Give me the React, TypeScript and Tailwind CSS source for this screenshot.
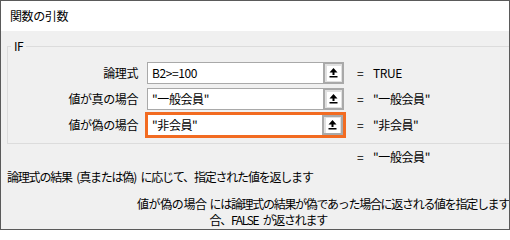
import React from "react";

type Arg = {
  label: string;
  value: string;
  result: string;
  active?: boolean;
};

const args: Arg[] = [
  { label: "論理式", value: "B2>=100", result: "TRUE" },
  { label: "値が真の場合", value: "\"一般会員\"", result: "\"一般会員\"" },
  { label: "値が偽の場合", value: "\"非会員\"", result: "\"非会員\"", active: true },
];

function RefIcon() {
  return (
    <svg width="9" height="10" viewBox="0 0 9 10" className="block">
      <path d="M4.5 0 L8.5 4.5 L5.5 4.5 L5.5 7 L3.5 7 L3.5 4.5 L0.5 4.5 Z" fill="#000" />
      <rect x="0.5" y="8" width="8" height="1.5" fill="#000" />
    </svg>
  );
}

function ArgInput({ value, active }: { value: string; active?: boolean }) {
  return (
    <div
      className={`flex h-[22px] w-[197px] ${
        active ? "-m-[2px] h-[26px] w-[201px] border-[3px] border-[#f26b21]" : ""
      }`}
    >
      <div
        className={`flex flex-1 items-center bg-white pl-[4px] ${
          active ? "" : "border border-r-0 border-[#a9a9a9]"
        }`}
      >
        {value}
      </div>
      <div className="flex w-[21px] items-center justify-center border-2 border-[#a9a9a9] bg-[#e1e1e1]">
        <div className="flex h-[15px] w-[14px] items-center justify-center bg-white">
          <RefIcon />
        </div>
      </div>
    </div>
  );
}

export default function App() {
  return (
    <div className="h-[230px] w-[510px] overflow-hidden border border-[#5a5a5a] bg-[#f0f0f0] font-['Noto_Sans_CJK_JP',sans-serif] text-[12px] leading-[16px] tracking-[-0.4px] text-black">
      <div className="flex h-[30px] items-center bg-white pl-[9px]">関数の引数</div>

      <fieldset className="mt-[7px] ml-[6px] w-[520px] border border-[#dcdcdc] pt-[8px] pb-[7px]">
        <legend className="ml-[3px] px-[3px] leading-[16px]">IF</legend>
        <div className="flex flex-col gap-[4px]">
          {args.map((a) => (
            <div key={a.label} className="flex h-[22px] items-center">
              <div className="w-[130px] text-right">{a.label}</div>
              <div className="ml-[9px]">
                <ArgInput value={a.value} active={a.active} />
              </div>
              <div className="ml-[13px] w-[16px]">=</div>
              <div>{a.result}</div>
            </div>
          ))}
        </div>
      </fieldset>

      <div className="mt-[5px] flex pl-[356px]">
        <span className="w-[16px]">=</span>
        <span>"一般会員"</span>
      </div>

      <div className="mt-[4px] pl-[6px] whitespace-nowrap tracking-[-1.2px] [word-spacing:3px]">
        論理式の結果 (真または偽) に応じて、指定された値を返します
      </div>

      <div className="mt-[11px] flex pl-[136px] whitespace-nowrap">
        <div className="w-[76px]">値が偽の場合</div>
        <div className="tracking-[-1.3px] [word-spacing:3px]">
          <div>には論理式の結果が偽であった場合に返される値を指定します</div>
          <div>合、FALSE が返されます</div>
        </div>
      </div>
    </div>
  );
}
